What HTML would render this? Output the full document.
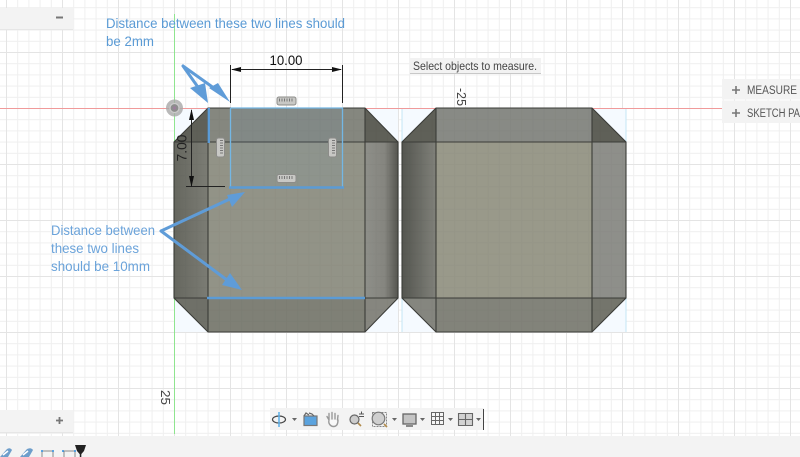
<!DOCTYPE html>
<html>
<head>
<meta charset="utf-8">
<style>
html,body{margin:0;padding:0;background:#fff;width:800px;height:457px;overflow:hidden}
svg{display:block}
text{font-family:"Liberation Sans",sans-serif}
</style>
</head>
<body>
<svg width="800" height="457" viewBox="0 0 800 457" xmlns="http://www.w3.org/2000/svg">
<defs>
<pattern id="minor" x="6" y="7.2" width="11.2" height="11.2" patternUnits="userSpaceOnUse">
<path d="M0.5 0V11.2M0 0.5H11.2" stroke="#efefef" stroke-width="1" fill="none"/>
</pattern>
<pattern id="major" x="6" y="-4" width="56" height="56" patternUnits="userSpaceOnUse">
<path d="M0.5 0V56M0 0.5H56" stroke="#e4e4e4" stroke-width="1" fill="none"/>
</pattern>
<pattern id="bodygrid" x="6" y="7.2" width="11.2" height="11.2" patternUnits="userSpaceOnUse">
<path d="M0.5 0V11.2M0 0.5H11.2" stroke="#000" stroke-opacity=".025" stroke-width="1" fill="none"/>
</pattern>
<linearGradient id="lc" x1="0" x2="1" y1="0" y2="0"><stop offset="0" stop-color="#66675f"/><stop offset="1" stop-color="#7b7c74"/></linearGradient>
<linearGradient id="rc" x1="0" x2="1" y1="0" y2="0"><stop offset="0" stop-color="#8e8f89"/><stop offset=".6" stop-color="#85857f"/><stop offset="1" stop-color="#55554f"/></linearGradient>
<linearGradient id="lc2" x1="0" x2="1" y1="0" y2="0"><stop offset="0" stop-color="#54554f"/><stop offset="1" stop-color="#80817a"/></linearGradient>
<g id="ruler">
<rect x="-9.500" y="-4" width="19" height="8" rx="2" fill="#c8c8c5" stroke="#8c8c89" stroke-width="1"/>
<path d="M-7 -2.500V0.500M-4.500 -2.500V0.500M-2 -2.500V0.500M0.500 -2.500V0.500M3 -2.500V0.500M5.500 -2.500V0.500" stroke="#777" stroke-width="1"/>
</g>
</defs>

<rect width="800" height="457" fill="#fff"/>
<rect width="800" height="436" fill="url(#minor)"/>
<rect width="800" height="436" fill="url(#major)"/>

<!-- light sketch corners behind body -->
<rect x="174" y="108" width="224" height="224" fill="#f5faff"/>
<rect x="402" y="108" width="224" height="224" fill="#f5faff"/>
<path d="M402 108V332M626 108V332" stroke="#c4e5f4" stroke-width="1"/>

<!-- red axis -->
<path d="M0 108.500H800" stroke="#f09a9a" stroke-width="1"/>
<!-- green axis -->
<path d="M174.500 14V434" stroke="#8fe58f" stroke-width="1"/>

<!-- Left body -->
<polygon points="174,142 208,108 208,142" fill="#5f6058"/>
<polygon points="365,108 398,142 365,142" fill="#5f6058"/>
<rect x="208" y="108" width="157" height="34" fill="#85877f"/>
<rect x="174" y="142" width="34" height="156" fill="url(#lc)"/>
<rect x="208" y="142" width="157" height="156" fill="#929387"/>
<rect x="365" y="142" width="33" height="156" fill="url(#rc)"/>
<polygon points="174,298 208,298 208,332" fill="#6f7068"/>
<rect x="208" y="298" width="157" height="34" fill="#7f8076"/>
<polygon points="365,298 398,298 365,332" fill="#86867f"/>
<path d="M174 142L208 108H365L398 142V298L365 332H208L174 298Z" fill="url(#bodygrid)"/>
<g stroke="#3b3c38" stroke-width="1.100" fill="none">
<path d="M174 142L208 108H365L398 142V298L365 332H208L174 298Z"/>
<path d="M174 142H398M174 298H398M208 108V332M365 108V332"/>
</g>

<!-- Right body -->
<polygon points="402,142 436,108 436,142" fill="#5f6058"/>
<polygon points="592,108 626,142 592,142" fill="#5f6058"/>
<rect x="436" y="108" width="156" height="34" fill="#888a85"/>
<rect x="402" y="142" width="34" height="156" fill="url(#lc2)"/>
<rect x="436" y="142" width="156" height="156" fill="#99998a"/>
<rect x="592" y="142" width="34" height="156" fill="#8e8f8a"/>
<polygon points="402,298 436,298 436,332" fill="#85867f"/>
<rect x="436" y="298" width="156" height="34" fill="#82837a"/>
<polygon points="592,298 626,298 592,332" fill="#74756c"/>
<path d="M402 142L436 108H592L626 142V298L592 332H436L402 298Z" fill="url(#bodygrid)"/>
<g stroke="#3b3c38" stroke-width="1.100" fill="none">
<path d="M402 142L436 108H592L626 142V298L592 332H436L402 298Z"/>
<path d="M402 142H626M402 298H626M436 108V332M592 108V332"/>
</g>

<!-- sketch profile -->
<rect x="230" y="108" width="112" height="79" fill="#6fa0c8" fill-opacity=".1"/>
<path d="M230.500 108H342.500V187M230.500 108V187" stroke="#74b7e4" stroke-width="1.300" fill="none"/>
<path d="M229 187.500H344" stroke="#5b9bd5" stroke-width="2.400"/>
<path d="M208.800 108V143" stroke="#5b9bd5" stroke-width="2.400"/>
<path d="M207 298H365" stroke="#5b9bd5" stroke-width="2.400"/>

<!-- origin -->
<circle cx="174.500" cy="108" r="8.500" fill="#a8a8a8" fill-opacity=".8"/>
<circle cx="174.500" cy="108" r="4.500" fill="#8d8d8d" stroke="#ccc" stroke-width="1.200"/>
<circle cx="174.500" cy="108" r="1.600" fill="#9b7f9b"/>

<!-- rulers -->
<use href="#ruler" transform="translate(286.500 101)"/>
<use href="#ruler" transform="translate(286.500 178.500)"/>
<use href="#ruler" transform="translate(220.500 147.500) rotate(90)"/>
<use href="#ruler" transform="translate(332.500 147.500) rotate(90)"/>

<!-- dimension 10.00 -->
<path d="M230.500 65V103M342.500 65V103M232 69.500H341" stroke="#222" stroke-width="1"/>
<polygon points="231,69.500 241,67 241,72" fill="#111"/>
<polygon points="342,69.500 332,67 332,72" fill="#111"/>
<text x="286" y="65" font-size="14" text-anchor="middle" fill="#111" textLength="33" lengthAdjust="spacingAndGlyphs">10.00</text>

<!-- dimension 7.00 -->
<path d="M191.500 110V186M186 186.500H225" stroke="#222" stroke-width="1"/>
<polygon points="191.500,109 189,120 194,120" fill="#111"/>
<polygon points="191.500,187 189,176 194,176" fill="#111"/>
<text transform="translate(186.500 148) rotate(-90)" font-size="14" text-anchor="middle" fill="#222" textLength="27" lengthAdjust="spacingAndGlyphs">7.00</text>

<!-- rotated axis labels -->
<text transform="translate(457 88) rotate(90)" font-size="13" fill="#444" textLength="18" lengthAdjust="spacingAndGlyphs">-25</text>
<text transform="translate(161 390) rotate(90)" font-size="13" fill="#444" textLength="15" lengthAdjust="spacingAndGlyphs">25</text>

<!-- blue annotations -->
<text x="106" y="28" font-size="14" fill="#5b9bd5" textLength="239" lengthAdjust="spacingAndGlyphs">Distance between these two lines should</text>
<text x="106" y="46" font-size="14" fill="#5b9bd5" textLength="48" lengthAdjust="spacingAndGlyphs">be 2mm</text>
<text x="51" y="235" font-size="14" fill="#6ba3da" textLength="104" lengthAdjust="spacingAndGlyphs">Distance between</text>
<text x="51" y="253" font-size="14" fill="#6ba3da" textLength="88" lengthAdjust="spacingAndGlyphs">these two lines</text>
<text x="51" y="271" font-size="14" fill="#6ba3da" textLength="99" lengthAdjust="spacingAndGlyphs">should be 10mm</text>

<!-- arrows -->
<g stroke="#5f9cd8" stroke-width="3" fill="none" stroke-linecap="round">
<path d="M183 66L200 90M183 66L218 91"/>
<path d="M161 231L232 198M161 231L231 283"/>
</g>
<g fill="#5f9cd8">
<polygon points="208,103 190,88 205,83"/>
<polygon points="230,102 209,88 218,83"/>
<polygon points="245,192 227,195 232,207"/>
<polygon points="242,290 230,273 222,285"/>
</g>

<!-- tooltip -->
<rect x="410" y="58" width="131" height="16" fill="#f2f2f2"/>
<rect x="410" y="73" width="131" height="1" fill="#c8c8c8"/>
<text x="413" y="70" font-size="12" fill="#444" textLength="124" lengthAdjust="spacingAndGlyphs">Select objects to measure.</text>

<!-- right panels -->
<rect x="722" y="79" width="78" height="20.500" fill="#f3f3f3"/>
<rect x="722" y="100.500" width="78" height="22.500" fill="#f3f3f3"/>
<path d="M732 90H740M736 86V94M732 113H740M736 109V117" stroke="#777" stroke-width="1.600"/>
<text x="747" y="94" font-size="11.500" fill="#555" textLength="50" lengthAdjust="spacingAndGlyphs">MEASURE</text>
<text x="747" y="117" font-size="11.500" fill="#555" textLength="53" lengthAdjust="spacingAndGlyphs">SKETCH PA</text>

<!-- left panels -->
<rect x="0" y="8" width="73" height="21" fill="#f3f3f3"/>
<rect x="0" y="29" width="73" height="1" fill="#e6e6e6"/>
<path d="M56 17.500H63" stroke="#777" stroke-width="2"/>
<rect x="0" y="410" width="73" height="22" fill="#f3f3f3"/>
<rect x="0" y="432" width="73" height="1" fill="#e6e6e6"/>
<path d="M56 420.500H63M59.500 417V424" stroke="#777" stroke-width="1.800"/>

<!-- bottom bar -->
<rect x="0" y="436" width="800" height="21" fill="#f3f3f3"/>

<!-- bottom left tool icons -->
<path d="M0 457L7 449Q10 447 12 450L8 457Z" fill="#6e9ecb"/>
<path d="M20 457L27 449Q31 447 33 450L29 457Z" fill="#6e9ecb"/>
<path d="M3 455L8 451" stroke="#fff" stroke-width="1.500"/>
<path d="M23 455L28 451" stroke="#fff" stroke-width="1.500"/>
<path d="M42 457V451H53V457M64 457V451H75V457" stroke="#888" stroke-width="1" fill="none"/>
<g fill="#2d8ee0"><circle cx="42" cy="451" r="1"/><circle cx="53" cy="451" r="1"/><circle cx="63" cy="451" r="1"/><circle cx="75" cy="451" r="1"/></g>
<polygon points="75,445 86,445 84,451 77,451" fill="#222"/>
<polygon points="77,451 84,451 80.500,455" fill="#222"/>
<rect x="79.800" y="451" width="1.500" height="6" fill="#222"/>

<!-- toolbar -->
<rect x="270" y="408" width="214" height="22" fill="#f3f3f3"/>
<!-- orbit -->
<ellipse cx="279" cy="419.500" rx="6.500" ry="3.500" fill="none" stroke="#444" stroke-width="1.200"/>
<path d="M279 412V427" stroke="#5aaee8" stroke-width="1.500"/>
<polygon points="292,418 297,418 294.500,421" fill="#666"/>
<!-- look at -->
<rect x="304" y="416" width="13" height="9.500" fill="#5ba3de" stroke="#777" stroke-width="1.200"/>
<path d="M304 416L306 413L309 415M309 413L312 414L314 416" stroke="#666" stroke-width="1.200" fill="none"/>
<!-- hand -->
<path d="M329 420L327 416.500M329 420L329 413.500M332 419L332 412.500M335 419V413.500M337.500 420L338 415.500M329 420C328 424 331 426.500 333.500 426.500C336.500 426.500 338 424 338 420" stroke="#999" stroke-width="1.400" fill="#f8f8f8" stroke-linecap="round"/>
<!-- zoom -->
<circle cx="354.500" cy="419.500" r="4.500" fill="#ccc" stroke="#666" stroke-width="1.200"/>
<path d="M358 423L361 426" stroke="#b08a4a" stroke-width="1.600"/>
<path d="M359 414H364M361.500 411.500V414M359 416.500H364" stroke="#555" stroke-width="1"/>
<!-- fit -->
<rect x="372.500" y="412.500" width="14" height="14" fill="none" stroke="#888" stroke-width="1" stroke-dasharray="2 1"/>
<circle cx="378.500" cy="418.500" r="6.300" fill="#cfcfcf" stroke="#777" stroke-width="1.200"/>
<path d="M384 424L387 427" stroke="#b08a4a" stroke-width="1.600"/>
<polygon points="392,418 397,418 394.500,421" fill="#666"/>
<!-- display -->
<rect x="403" y="414" width="13" height="10" fill="#c4c4c4" stroke="#666" stroke-width="1.300"/>
<path d="M406 426H413" stroke="#666" stroke-width="1.500"/>
<polygon points="420,418 425,418 422.500,421" fill="#666"/>
<!-- grid -->
<path d="M431.500 412.500H443.500V424.500H431.500ZM431.500 416.500H443.500M431.500 420.500H443.500M435.500 412.500V424.500M439.500 412.500V424.500" fill="#f5f5f5" stroke="#666" stroke-width="1"/>
<polygon points="448,418 453,418 450.500,421" fill="#666"/>
<!-- viewports -->
<path d="M458.500 413.500H472.500V425.500H458.500ZM458.500 419.500H472.500M465.500 413.500V425.500" fill="#d2d2d2" stroke="#666" stroke-width="1.100"/>
<polygon points="476,418 481,418 478.500,421" fill="#666"/>
<path d="M483.500 409V430" stroke="#444" stroke-width="1"/>
</svg>
</body>
</html>
